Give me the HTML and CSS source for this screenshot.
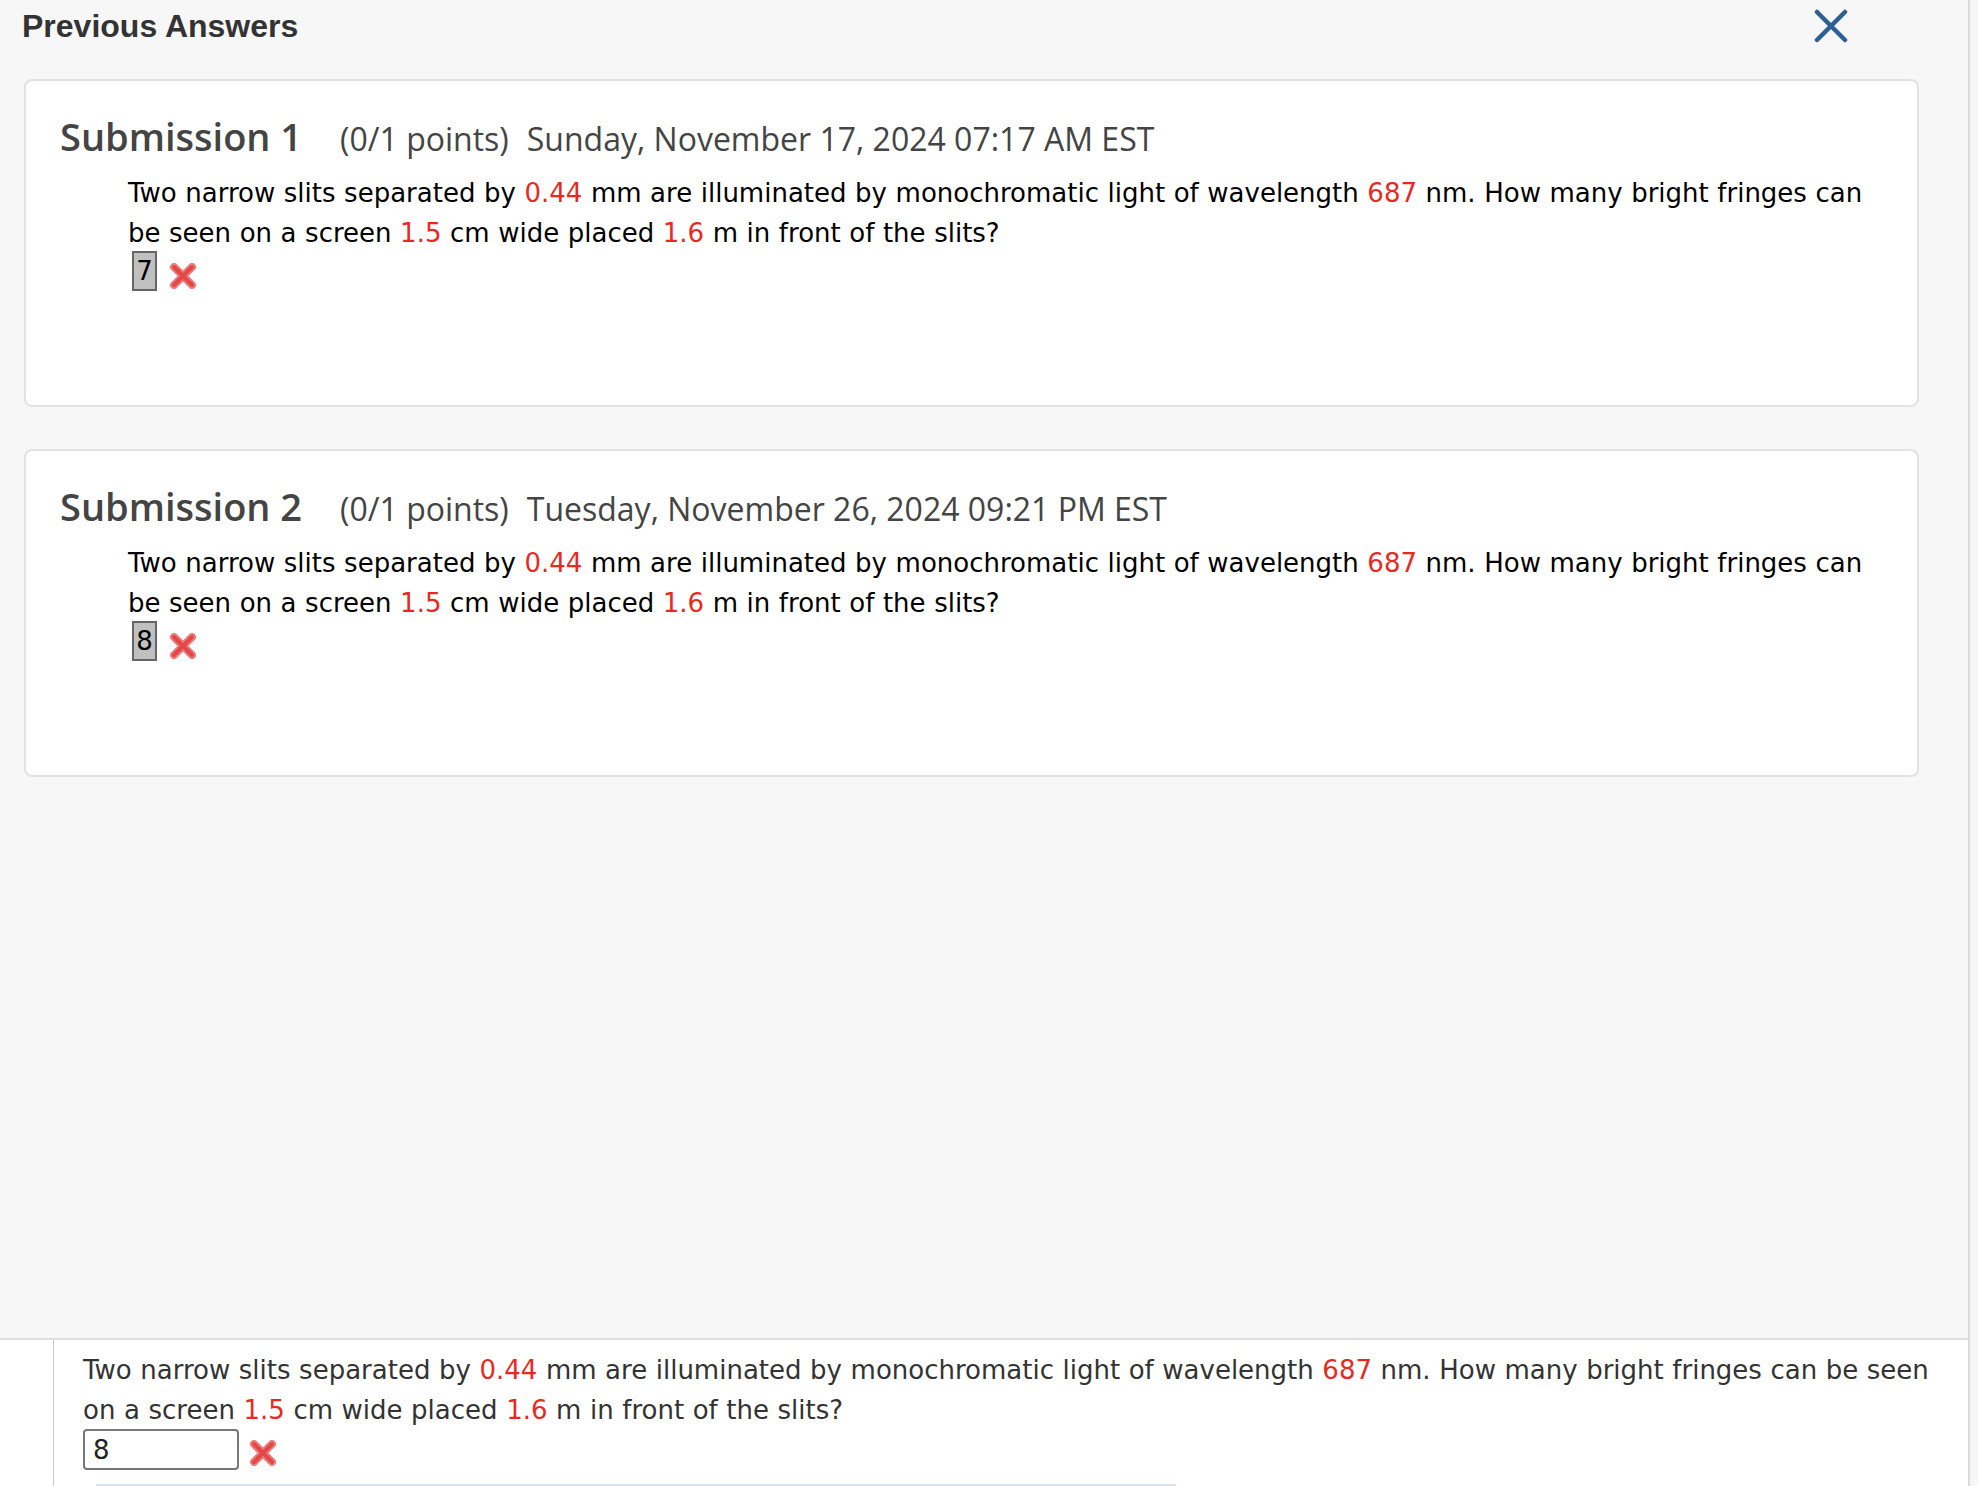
FILE: index.html
```html
<!DOCTYPE html>
<html lang="en">
<head>
<meta charset="utf-8">
<title>Previous Answers</title>
<link rel="stylesheet" href="styles.css">
</head>
<body>
<div class="page">
  <section class="modal">
    <header class="modal-head">
      <h2 class="modal-title">Previous Answers</h2>
      <button class="close" aria-label="Close">
        <svg width="34" height="34" viewBox="0 0 34 34"><path d="M3 3L31 31M31 3L3 31" stroke="#2b5f95" stroke-width="4.5" stroke-linecap="round" fill="none"/></svg>
      </button>
    </header>
    <div class="subs">
      <article class="sub">
        <h3 class="sub-head">Submission 1<span class="pts">(0/1 points)</span><span class="date">Sunday, November 17, 2024 07:17 AM EST</span></h3>
        <div class="sub-body">
          <p class="q">Two narrow slits separated by <span class="num">0.44</span> mm are illuminated by monochromatic light of wavelength <span class="num">687</span> nm. How many bright fringes can be seen on a screen <span class="num">1.5</span> cm wide placed <span class="num">1.6</span> m in front of the slits?</p>
          <div class="ans">
            <span class="ans-box">7</span>
            <svg class="wrong" width="28" height="26" viewBox="0 0 28 26"><path d="M5 4L23 22M23 4L5 22" stroke="#ef7b7b" stroke-width="8" stroke-linecap="round" fill="none"/><path d="M5 4L23 22M23 4L5 22" stroke="#e24848" stroke-width="4" stroke-linecap="round" fill="none"/></svg>
          </div>
        </div>
      </article>
      <article class="sub">
        <h3 class="sub-head">Submission 2<span class="pts">(0/1 points)</span><span class="date">Tuesday, November 26, 2024 09:21 PM EST</span></h3>
        <div class="sub-body">
          <p class="q">Two narrow slits separated by <span class="num">0.44</span> mm are illuminated by monochromatic light of wavelength <span class="num">687</span> nm. How many bright fringes can be seen on a screen <span class="num">1.5</span> cm wide placed <span class="num">1.6</span> m in front of the slits?</p>
          <div class="ans">
            <span class="ans-box">8</span>
            <svg class="wrong" width="28" height="26" viewBox="0 0 28 26"><path d="M5 4L23 22M23 4L5 22" stroke="#ef7b7b" stroke-width="8" stroke-linecap="round" fill="none"/><path d="M5 4L23 22M23 4L5 22" stroke="#e24848" stroke-width="4" stroke-linecap="round" fill="none"/></svg>
          </div>
        </div>
      </article>
    </div>
  </section>
  <section class="current">
    <div class="current-inner">
      <p class="q q-cur">Two narrow slits separated by <span class="num">0.44</span> mm are illuminated by monochromatic light of wavelength <span class="num">687</span> nm. How many bright fringes can be seen on a screen <span class="num">1.5</span> cm wide placed <span class="num">1.6</span> m in front of the slits?</p>
      <div class="ans ans-cur">
        <input class="ans-input" type="text" value="8">
        <svg class="wrong wrong-cur" width="28" height="26" viewBox="0 0 28 26"><path d="M5 4L23 22M23 4L5 22" stroke="#ef7b7b" stroke-width="8" stroke-linecap="round" fill="none"/><path d="M5 4L23 22M23 4L5 22" stroke="#e24848" stroke-width="4" stroke-linecap="round" fill="none"/></svg>
      </div>
      <div class="next-bar"></div>
    </div>
  </section>
</div>
</body>
</html>
```
FILE: styles.css
```css
html, body {
  margin: 0;
  padding: 0;
  height: 100%;
  overflow: hidden;
  background: #f7f7f7;
}

.page {
  width: 1968px;
  height: 1486px;
  border-right: 2px solid #dcdcdc;
  display: flex;
  flex-direction: column;
}

.modal {
  flex: none;
  height: 1338px;
  background: #f7f7f7;
}

.modal-head {
  height: 79px;
  box-sizing: border-box;
  padding: 6px 120px 0 22px;
  display: flex;
  justify-content: space-between;
  align-items: flex-start;
}

.modal-title {
  margin: 0;
  font: 700 32px/40px "Liberation Sans", Arial, sans-serif;
  color: #333;
}

.close {
  border: 0;
  background: none;
  padding: 0;
  margin-top: 3px;
  width: 34px;
  height: 34px;
  cursor: pointer;
}

.close svg {
  display: block;
}

.subs {
  margin: 0 49px 0 24px;
  display: flex;
  flex-direction: column;
  gap: 42px;
}

.sub {
  background: #fff;
  border: 2px solid #e2e2e2;
  border-radius: 8px;
  height: 328px;
  box-sizing: border-box;
  padding: 29px 34px 0;
}

.sub-head {
  margin: 0;
  font: 600 38px/52px "Open Sans", sans-serif;
  color: #444;
}

.pts,
.date {
  font-weight: 400;
  font-size: 32px;
  line-height: 1;
}

.pts {
  margin-left: 38px;
}

.date {
  margin-left: 18px;
}

.sub-body {
  padding-left: 68px;
  margin-top: 11px;
}

.q {
  margin: 0;
  font: 26px/40px "DejaVu Sans", Verdana, sans-serif;
  word-spacing: 0.3px;
  color: #000;
}

.num {
  color: #e8291f;
}

.ans {
  display: flex;
  align-items: flex-start;
  margin-top: -2px;
}

.ans-box {
  box-sizing: border-box;
  width: 25px;
  height: 40px;
  margin-left: 4px;
  border: 2px solid #666;
  background: #c0c0c0;
  font: 26px/36px "DejaVu Sans", Verdana, sans-serif;
  text-align: center;
  color: #000;
}

.wrong {
  display: block;
  margin: 12px 0 0 12px;
}

.current {
  flex: 1;
  background: #fff;
  border-top: 2px solid #dedede;
}

.current-inner {
  margin-left: 53px;
  border-left: 1px solid #c8c8c8;
  padding: 10px 20px 0 29px;
  height: 100%;
  box-sizing: border-box;
}

.q-cur {
  color: #333;
}

.ans-cur {
  margin-top: -1px;
}

.ans-input {
  box-sizing: border-box;
  width: 156px;
  height: 41px;
  margin: 0;
  border: 2px solid #777;
  border-radius: 4px;
  padding: 0 8px;
  font: 26px "DejaVu Sans", Verdana, sans-serif;
  color: #222;
  background: #fff;
}

.wrong-cur {
  margin: 11px 0 0 10px;
}

.next-bar {
  margin: 14px 0 0 13px;
  width: 1080px;
  height: 20px;
  border-top: 2px solid #d6e1f1;
}
```
